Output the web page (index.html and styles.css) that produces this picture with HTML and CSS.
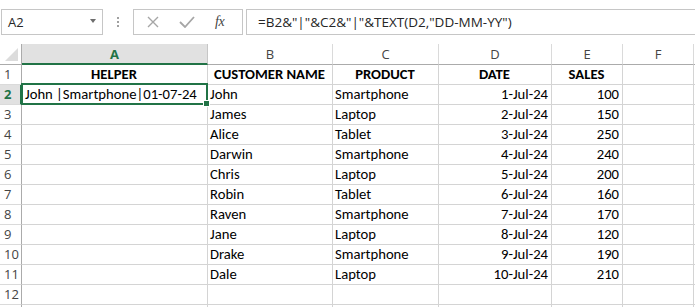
FILE: index.html
```html
<!DOCTYPE html>
<html>
<head>
<meta charset="utf-8">
<link rel="stylesheet" href="styles.css">
</head>
<body>
<div class="app">
  <div class="fbar">
    <div class="namebox"><span class="nb-text">A2</span><span class="nb-arrow"></span></div>
    <div class="dots"><i></i><i></i><i></i></div>
    <div class="btns">
      <svg class="ic" width="12" height="12" viewBox="0 0 12 12"><path d="M1 1 L11 11 M11 1 L1 11" stroke="#a6a6a6" stroke-width="1.4" fill="none"/></svg>
      <svg class="ic" width="16" height="12" viewBox="0 0 16 12"><path d="M1 6 L6 11 L15 1" stroke="#a6a6a6" stroke-width="1.8" fill="none"/></svg>
      <span class="fx">fx</span>
    </div>
    <div class="formula">=B2&amp;"|"&amp;C2&amp;"|"&amp;TEXT(D2,"DD-MM-YY")</div>
  </div>
  <div class="sheet">
    <div class="ch corner"><span class="tri"></span></div>
    <div class="ch selh">A</div>
    <div class="ch">B</div>
    <div class="ch">C</div>
    <div class="ch">D</div>
    <div class="ch">E</div>
    <div class="ch">F</div>
    <div class="ch edge"></div>

    <div class="rh">1</div><div class="c hd">HELPER</div><div class="c hd">CUSTOMER NAME</div><div class="c hd">PRODUCT</div><div class="c hd">DATE</div><div class="c hd">SALES</div><div class="c"></div><div class="c e"></div>
    <div class="rh selr">2</div><div class="c sel">John |Smartphone|01-07-24</div><div class="c">John</div><div class="c">Smartphone</div><div class="c n">1-Jul-24</div><div class="c n">100</div><div class="c"></div><div class="c e"></div>
    <div class="rh">3</div><div class="c"></div><div class="c">James</div><div class="c">Laptop</div><div class="c n">2-Jul-24</div><div class="c n">150</div><div class="c"></div><div class="c e"></div>
    <div class="rh">4</div><div class="c"></div><div class="c">Alice</div><div class="c">Tablet</div><div class="c n">3-Jul-24</div><div class="c n">250</div><div class="c"></div><div class="c e"></div>
    <div class="rh">5</div><div class="c"></div><div class="c">Darwin</div><div class="c">Smartphone</div><div class="c n">4-Jul-24</div><div class="c n">240</div><div class="c"></div><div class="c e"></div>
    <div class="rh">6</div><div class="c"></div><div class="c">Chris</div><div class="c">Laptop</div><div class="c n">5-Jul-24</div><div class="c n">200</div><div class="c"></div><div class="c e"></div>
    <div class="rh">7</div><div class="c"></div><div class="c">Robin</div><div class="c">Tablet</div><div class="c n">6-Jul-24</div><div class="c n">160</div><div class="c"></div><div class="c e"></div>
    <div class="rh">8</div><div class="c"></div><div class="c">Raven</div><div class="c">Smartphone</div><div class="c n">7-Jul-24</div><div class="c n">170</div><div class="c"></div><div class="c e"></div>
    <div class="rh">9</div><div class="c"></div><div class="c">Jane</div><div class="c">Laptop</div><div class="c n">8-Jul-24</div><div class="c n">120</div><div class="c"></div><div class="c e"></div>
    <div class="rh">10</div><div class="c"></div><div class="c">Drake</div><div class="c">Smartphone</div><div class="c n">9-Jul-24</div><div class="c n">190</div><div class="c"></div><div class="c e"></div>
    <div class="rh">11</div><div class="c"></div><div class="c">Dale</div><div class="c">Laptop</div><div class="c n">10-Jul-24</div><div class="c n">210</div><div class="c"></div><div class="c e"></div>
    <div class="rh">12</div><div class="c"></div><div class="c"></div><div class="c"></div><div class="c"></div><div class="c"></div><div class="c"></div><div class="c e"></div>
    <div class="rh"></div><div class="c"></div><div class="c"></div><div class="c"></div><div class="c"></div><div class="c"></div><div class="c"></div><div class="c e"></div>
  </div>
</div>
</body>
</html>
```
FILE: styles.css
```css
* { box-sizing: border-box; }
html, body { margin: 0; padding: 0; background: #fff; overflow: hidden; }
.app { width: 695px; height: 307px; overflow: hidden; }

.fbar {
  height: 44px;
  display: flex;
  align-items: flex-start;
  padding-top: 9px;
  padding-left: 1px;
  font-family: "Open Sans", "Noto Sans", sans-serif;
  font-size: 13px;
  color: #262626;
}
.namebox {
  width: 102px; height: 26px;
  border: 1px solid #c6c6c6;
  display: flex; align-items: center; justify-content: space-between;
  padding: 0 6px 0 6px;
}
.nb-arrow {
  width: 0; height: 0;
  border-left: 3.5px solid transparent;
  border-right: 3.5px solid transparent;
  border-top: 4px solid #6d6d6d;
  margin-top: -2px;
}
.dots {
  width: 30px; height: 26px;
  display: flex; flex-direction: column; align-items: center; justify-content: center; gap: 2px;
}
.dots i { display: block; width: 2px; height: 2px; background: #a0a0a0; }
.btns {
  width: 110px; height: 26px;
  border: 1px solid #c6c6c6;
  display: flex; align-items: center;
  padding-left: 13px;
  gap: 0;
}
.btns .ic:first-child { margin-right: 20px; }
.btns .ic:nth-child(2) { margin-right: 20px; }
.fx {
  font-family: "Liberation Serif", serif;
  font-style: italic;
  font-size: 14px;
  color: #444;
  letter-spacing: -0.5px;
}
.formula {
  margin-left: 3px;
  flex: 1;
  height: 26px;
  border: 1px solid #c6c6c6;
  border-right: none;
  padding-left: 11px;
  line-height: 24px;
  font-size: 13.5px;
  white-space: nowrap;
}

.sheet {
  display: grid;
  grid-template-columns: 22px 186px 125px 106px 113px 71px 71px 1px;
  grid-template-rows: 21px;
  grid-auto-rows: 20px;
  font-family: "Carlito", "Lato", sans-serif;
  font-size: 14.67px;
  color: #000;
}
.ch {
  border-right: 1px solid #dadada;
  border-bottom: 1px solid #ababab;
  font-family: "Open Sans", "Noto Sans", sans-serif;
  font-size: 13px;
  color: #444;
  text-align: center;
  line-height: 20px;
}
.ch.corner { position: relative; border-right: 1px solid #ababab; }
.tri {
  position: absolute; right: 3px; bottom: 3px;
  width: 0; height: 0;
  border-left: 13px solid transparent;
  border-bottom: 13px solid #dcdcdc;
}
.ch.selh {
  background: #e1e1e1;
  color: #217346;
  font-weight: bold;
  border-bottom: 2px solid #217346;
  border-right: 1px solid #c6c6c6;
}
.ch.edge { border-right: none; }
.rh {
  border-right: 1px solid #ababab;
  border-bottom: 1px solid #dadada;
  font-family: "Open Sans", "Noto Sans", sans-serif;
  font-size: 13px;
  color: #444;
  padding-left: 4px;
  line-height: 19px;
}
.rh.selr {
  background: #e1e1e1;
  color: #217346;
  font-weight: bold;
  border-right: 2px solid #217346;
}
.c {
  border-right: 1px solid #d4d4d4;
  border-bottom: 1px solid #d4d4d4;
  padding: 0 3px 0 2px;
  line-height: 19px;
  white-space: nowrap;
  overflow: visible;
}
.c.e { border-right: none; }
.c.hd { font-weight: bold; text-align: center; }
.c.n { text-align: right; }
.c.sel { position: relative; padding-left: 3px; }
.c.sel::after {
  content: "";
  position: absolute;
  top: -2px; left: -1px; right: -1px; bottom: -1px;
  border: 2px solid #217346;
}
.c.sel::before {
  content: "";
  position: absolute;
  right: -3px; bottom: -3px;
  width: 5px; height: 5px;
  background: #217346;
  border: 1px solid #fff;
  z-index: 2;
}
```
